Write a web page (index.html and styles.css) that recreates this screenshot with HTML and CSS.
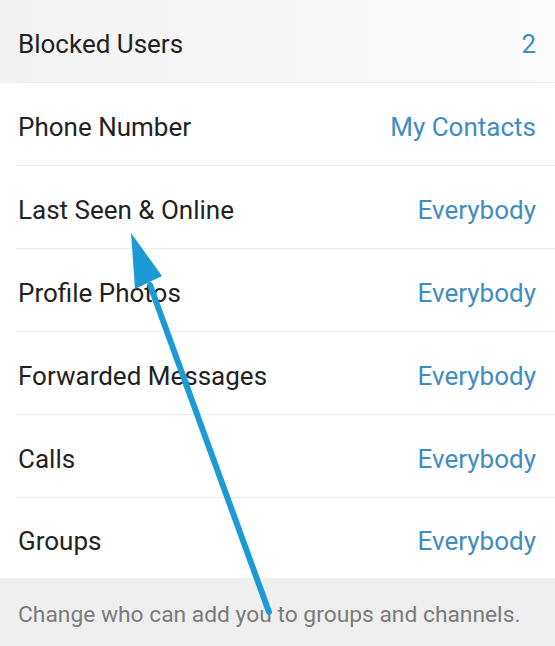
FILE: index.html
```html
<!DOCTYPE html>
<html lang="en">
<head>
  <meta charset="UTF-8">
  <title>Privacy</title>
  <link rel="stylesheet" href="styles.css">
</head>
<body>

  <div class="screen">
    <div class="list">
      <div class="row pressed">
        <span class="label">Blocked Users</span>
        <span class="value">2</span>
      </div>
      <div class="row">
        <span class="label">Phone Number</span>
        <span class="value">My Contacts</span>
      </div>
      <div class="row">
        <span class="label">Last Seen &amp; Online</span>
        <span class="value">Everybody</span>
      </div>
      <div class="row">
        <span class="label">Profile Photos</span>
        <span class="value">Everybody</span>
      </div>
      <div class="row">
        <span class="label">Forwarded Messages</span>
        <span class="value">Everybody</span>
      </div>
      <div class="row">
        <span class="label">Calls</span>
        <span class="value">Everybody</span>
      </div>
      <div class="row last">
        <span class="label">Groups</span>
        <span class="value">Everybody</span>
      </div>
    </div>

    <p class="hint">Change who can add you to groups and channels.</p>

    <!-- annotation arrow drawn over the list -->
    <svg class="arrow" width="555" height="646" viewBox="0 0 555 646">
      <line x1="150" y1="285" x2="269" y2="612" stroke="#1c9ad6" stroke-width="6" stroke-linecap="round" />
      <polygon points="131,233 162,276 135,289" fill="#1c9ad6" />
    </svg>
  </div>

</body>
</html>
```

FILE: styles.css
```css
body {
  margin: 0;
  font-family: Roboto, "Noto Sans", sans-serif;
  background-color: #fff;
}
.screen {
  position: relative;
  width: 555px;
  height: 646px;
  overflow: hidden;
  background-color: #efefef;
}
.list {
  background-color: #fff;
}
.row {
  display: flex;
  justify-content: space-between;
  align-items: center;
  height: 83px;
  padding: 5px 19px 0 18px;
  box-sizing: border-box;
  font-size: 26px;
  background: linear-gradient(#ebebeb, #ebebeb) no-repeat left 16px bottom / calc(100% - 16px) 1px;
}
.row.pressed {
  background:
    linear-gradient(#ebebeb, #ebebeb) no-repeat left 16px bottom / calc(100% - 16px) 1px,
    linear-gradient(90deg, #f3f3f3, #f8f8f8 60%, #fbfbfb);
}
.row.last {
  background: none;
  height: 80px;
}
.label {
  color: #222;
}
.value {
  color: #3f8dc1;
}
.hint {
  margin: 0;
  padding: 23px 18px 0;
  font-size: 22.8px;
  color: #7b7b7b;
}
.arrow {
  position: absolute;
  left: 0;
  top: 0;
}
```
